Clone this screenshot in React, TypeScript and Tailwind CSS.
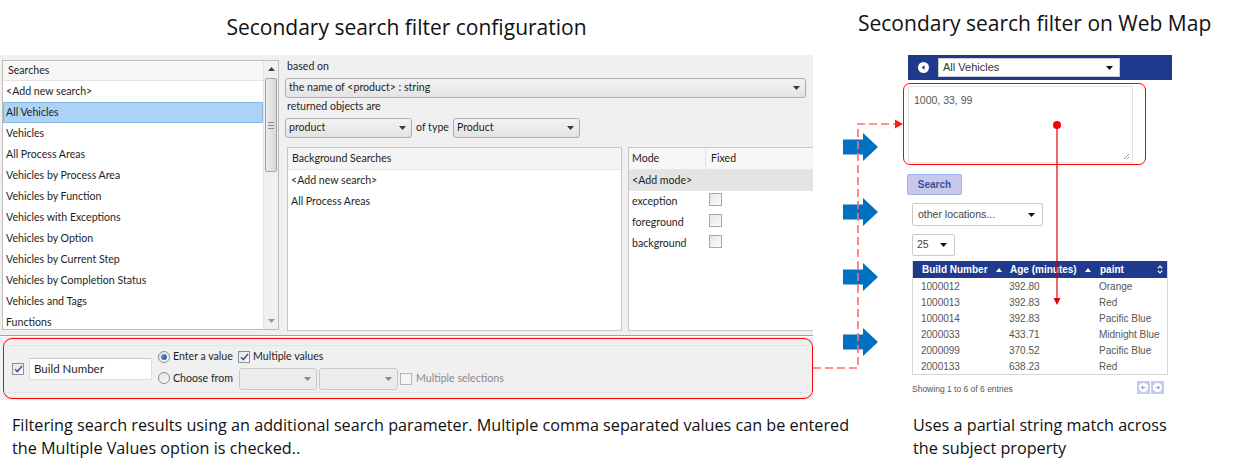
import React from "react";

function DownTri({ color = "#3a3a3a" }: { color?: string }) {
  return (
    <svg width="7" height="4" viewBox="0 0 7 4" className="shrink-0">
      <polygon points="0,0 7,0 3.5,4" fill={color} />
    </svg>
  );
}

function GrayDrop({ className, text }: { className: string; text: string }) {
  return (
    <div
      className={`flex items-center justify-between shrink-0 px-[3px] pr-[5px] border border-[#adadad] rounded-[3px] bg-linear-to-b from-[#f3f3f3] to-[#e3e3e3] ${className}`}
    >
      <span>{text}</span>
      <DownTri />
    </div>
  );
}

function WinCheck({ checked = false, className = "" }: { checked?: boolean; className?: string }) {
  return (
    <div
      className={`w-[12px] h-[12px] shrink-0 border border-[#8e8f8f] bg-linear-to-br from-[#e6e6e6] to-[#fbfbfb] flex items-center justify-center ${className}`}
    >
      {checked && (
        <svg width="9" height="8" viewBox="0 0 9 8">
          <path d="M1 4.2 L3.4 6.6 L8 1" stroke="#3b5998" strokeWidth="1.6" fill="none" />
        </svg>
      )}
    </div>
  );
}

function Radio({ selected = false }: { selected?: boolean }) {
  return (
    <div className="w-[12px] h-[12px] shrink-0 rounded-full border border-[#8e8f8f] bg-linear-to-br from-[#e4e4e4] to-[#fcfcfc] flex items-center justify-center">
      {selected && <div className="w-[6px] h-[6px] rounded-full bg-linear-to-br from-[#6fa3e8] to-[#1d4f9c]" />}
    </div>
  );
}

const searches = [
  "<Add new search>",
  "All Vehicles",
  "Vehicles",
  "All Process Areas",
  "Vehicles by Process Area",
  "Vehicles by Function",
  "Vehicles with Exceptions",
  "Vehicles by Option",
  "Vehicles by Current Step",
  "Vehicles by Completion Status",
  "Vehicles and Tags",
  "Functions",
];

function ConfigPanel() {
  return (
    <div className="w-[813px] h-[345px] shrink-0 bg-[#f0f0f0] overflow-hidden font-['Lato','Liberation_Sans',sans-serif] text-[10.6px] text-[#1e1e1e] flex flex-col">
      <div className="h-[278px] flex shrink-0">
        {/* Searches list */}
        <div className="mt-[5px] ml-[2px] w-[277px] h-[270px] shrink-0 border border-[#bdbdbd] bg-white flex overflow-hidden">
          <div className="flex-1 flex flex-col">
            <div className="h-[20px] shrink-0 flex items-center pl-[5px] bg-[#f7f7f7] border-b border-[#e2e2e2]">Searches</div>
            {searches.map((s) => (
              <div
                key={s}
                className={
                  s === "All Vehicles"
                    ? "h-[21px] shrink-0 flex items-center pl-[3px] bg-[#acd3f6] shadow-[inset_0_0_0_1px_#85b5e2]"
                    : "h-[21px] shrink-0 flex items-center pl-[3px]"
                }
              >
                {s}
              </div>
            ))}
          </div>
          <div className="w-[15px] shrink-0 bg-[#f0f0f0] border-l border-[#e4e4e4] flex flex-col items-center">
            <div className="h-[16px] flex items-center justify-center">
              <svg width="7" height="4" viewBox="0 0 7 4">
                <polygon points="0,4 7,4 3.5,0" fill="#404040" />
              </svg>
            </div>
            <div className="mt-[1px] w-[12px] h-[94px] rounded-[2px] border border-[#a3a3a3] bg-linear-to-r from-[#ececec] to-[#d8d8d8] flex flex-col items-center justify-center gap-[2px]">
              <div className="w-[6px] h-px bg-[#8a8a8a]" />
              <div className="w-[6px] h-px bg-[#8a8a8a]" />
              <div className="w-[6px] h-px bg-[#8a8a8a]" />
            </div>
            <div className="flex-1" />
            <div className="h-[16px] flex items-center justify-center">
              <DownTri color="#9a9a9a" />
            </div>
          </div>
        </div>

        {/* right part */}
        <div className="ml-[5px] w-[529px] shrink-0 flex flex-col pt-[4px]">
          <div className="h-[16px] flex items-center pl-[3px]">based on</div>
          <GrayDrop className="mt-[3px] ml-[1px] w-[521px] h-[20px]" text="the name of <product> : string" />
          <div className="h-[18px] flex items-center pl-[3px]">returned objects are</div>
          <div className="mt-[2px] ml-[1px] flex items-center h-[20px]">
            <GrayDrop className="w-[127px] h-[20px]" text="product" />
            <span className="mx-[4px]">of type</span>
            <GrayDrop className="w-[127px] h-[20px]" text="Product" />
          </div>
          <div className="mt-[9px] ml-[3px] flex gap-[6px] h-[184px]">
            <div className="w-[335px] h-[184px] shrink-0 border border-[#c6c6c6] bg-white">
              <div className="h-[22px] flex items-center pl-[4px] bg-[#f5f5f5] border-b border-[#e6e6e6]">Background Searches</div>
              <div className="h-[21px] flex items-center pl-[3px]">&lt;Add new search&gt;</div>
              <div className="h-[21px] flex items-center pl-[3px]">All Process Areas</div>
            </div>
            <div className="w-[200px] h-[184px] shrink-0 border border-[#c6c6c6] bg-white">
              <div className="h-[22px] flex bg-[#f7f7f7] border-b border-[#e6e6e6]">
                <div className="w-[77px] flex items-center pl-[3px] border-r border-[#e2e2e2]">Mode</div>
                <div className="flex items-center pl-[5px]">Fixed</div>
              </div>
              <div className="h-[21px] flex items-center pl-[3px] bg-[#e4e4e4]">&lt;Add mode&gt;</div>
              {["exception", "foreground", "background"].map((m) => (
                <div key={m} className="h-[21px] flex items-center">
                  <div className="w-[78px] pl-[3px]">{m}</div>
                  <WinCheck className="ml-[2px] -mt-[4px] border-[#a8a8a8] w-[13px] h-[13px]" />
                </div>
              ))}
            </div>
          </div>
        </div>
      </div>

      {/* separator */}
      <div className="h-[2px] shrink-0" />
      <div className="h-px shrink-0 bg-[#a2a2a2]" />
      <div className="h-px shrink-0 bg-white" />

      {/* bottom filter row */}
      <div className="mt-[1px] ml-[3px] w-[810px] h-[61px] shrink-0 border border-[#ff0000] rounded-[9px] flex flex-col justify-center">
        <div className="h-[48px] border-y border-[#e3e3e3] flex items-center">
          <WinCheck checked className="ml-[8px]" />
          <div className="ml-[5px] w-[123px] h-[22px] bg-white border border-[#dcdcdc] border-t-[#c5c5c5] flex items-center pl-[4px] text-[11.5px]">
            Build Number
          </div>
          <div className="ml-[6px] flex flex-col">
            <div className="h-[20px] flex items-center">
              <div className="w-[80px] flex items-center gap-[3px]">
                <Radio selected />
                <span>Enter a value</span>
              </div>
              <WinCheck checked />
              <span className="ml-[3px]">Multiple values</span>
            </div>
            <div className="h-[23px] flex items-center">
              <div className="w-[81px] flex items-center gap-[3px]">
                <Radio />
                <span>Choose from</span>
              </div>
              <div className="w-[78px] h-[22px] border border-[#c8c8c8] rounded-[3px] bg-[#ececec] flex items-center justify-end pr-[5px]">
                <DownTri color="#888" />
              </div>
              <div className="ml-[2px] w-[79px] h-[22px] border border-[#c8c8c8] rounded-[3px] bg-[#ececec] flex items-center justify-end pr-[5px]">
                <DownTri color="#888" />
              </div>
              <WinCheck className="ml-[2px] border-[#b5b5b5] bg-none bg-[#f4f4f4]" />
              <span className="ml-[4px] text-[#8a8a8a]">Multiple selections</span>
            </div>
          </div>
        </div>
      </div>
    </div>
  );
}

function BlueArrow() {
  return (
    <svg width="35" height="28" viewBox="0 0 35 28">
      <polygon points="0,6.5 20,6.5 20,0 35,14 20,28 20,21.5 0,21.5" fill="#0070c0" />
    </svg>
  );
}

const rows = [
  ["1000012", "392.80", "Orange"],
  ["1000013", "392.83", "Red"],
  ["1000014", "392.83", "Pacific Blue"],
  ["2000033", "433.71", "Midnight Blue"],
  ["2000099", "370.52", "Pacific Blue"],
  ["2000133", "638.23", "Red"],
];

function UpTri() {
  return (
    <svg width="6" height="4" viewBox="0 0 6 4" className="shrink-0">
      <polygon points="0,4 6,4 3,0" fill="#ffffff" />
    </svg>
  );
}

function WebMap() {
  return (
    <div className="flex-1 flex flex-col font-['Liberation_Sans',Arial,sans-serif] text-[10px] text-[#555]">
      <div className="ml-[5px] w-[264px] h-[25px] bg-[#1f3a8c] flex items-center">
        <svg width="11" height="11" viewBox="0 0 11 11" className="ml-[10px]">
          <circle cx="5.5" cy="5.5" r="5.5" fill="#ffffff" />
          <polygon points="3.6,5.5 6.6,3.3 6.6,7.7" fill="#1f3a8c" />
        </svg>
        <div className="ml-[9px] w-[182px] h-[19px] bg-white border border-[#cfcfcf] flex items-center justify-between pl-[4px] pr-[6px] text-[11px] text-[#333]">
          <span>All Vehicles</span>
          <DownTri color="#111" />
        </div>
      </div>
      <div className="mt-[3px] w-[243px] h-[82px] border border-[#ff0000] rounded-[7px] pl-[4px] pt-[2px]">
        <div className="relative w-[225px] h-[77px] bg-white border border-[#e2e2e2] pl-[5px] pt-[6px] text-[10.5px] text-[#555]">
          1000, 33, 99
          <svg width="7" height="7" viewBox="0 0 7 7" className="absolute right-[2px] bottom-[2px]">
            <path d="M6 1 L1 6 M6 4 L4 6" stroke="#999" strokeWidth="1" />
          </svg>
        </div>
      </div>
      <div className="mt-[9px] ml-[4px] w-[55px] h-[21px] bg-[#c6c9e9] border border-[#9cb2ee] rounded-[2px] flex items-center justify-center text-[10px] font-bold text-[#3a4f9e]">
        Search
      </div>
      <div className="mt-[8px] ml-[9px] w-[131px] h-[23px] bg-white border border-[#c9c9c9] rounded-[2px] flex items-center justify-between pl-[5px] pr-[7px] text-[10.5px] text-[#444]">
        <span>other locations...</span>
        <DownTri color="#111" />
      </div>
      <div className="mt-[8px] ml-[9px] w-[43px] h-[22px] bg-white border border-[#c9c9c9] rounded-[2px] flex items-center justify-between pl-[4px] pr-[7px] text-[10.5px] text-[#444]">
        <span>25</span>
        <DownTri color="#111" />
      </div>
      <div className="mt-[5px] ml-[9px] w-[256px] border border-[#d6d6d6] border-t-0">
        <div className="h-[17px] bg-[#1f3a8c] flex items-center text-white font-bold text-[10px] whitespace-nowrap">
          <div className="w-[88px] shrink-0 pl-[9px] flex items-center gap-[8px]">
            <span>Build Number</span>
            <UpTri />
          </div>
          <div className="w-[90px] shrink-0 pl-[9px] flex items-center gap-[8px]">
            <span>Age (minutes)</span>
            <UpTri />
          </div>
          <div className="flex-1 pl-[9px] pr-[4px] flex items-center justify-between">
            <span>paint</span>
            <svg width="6" height="9" viewBox="0 0 6 9">
              <path d="M0.8 3.4 L3 1.2 L5.2 3.4 M0.8 5.6 L3 7.8 L5.2 5.6" stroke="#fff" strokeWidth="1.2" fill="none" />
            </svg>
          </div>
        </div>
        {rows.map((r) => (
          <div key={r[0] + r[2]} className="h-[16px] flex items-center bg-white">
            <div className="w-[88px] pl-[8px]">{r[0]}</div>
            <div className="w-[90px] pl-[8px]">{r[1]}</div>
            <div className="flex-1 pl-[8px]">{r[2]}</div>
          </div>
        ))}
      </div>
      <div className="mt-[5px] ml-[9px] w-[252px] flex items-center justify-between">
        <span className="text-[8.5px] text-[#555] mt-[3px]">Showing 1 to 6 of 6 entries</span>
        <div className="flex gap-px">
          {[0, 1].map((i) => (
            <div key={i} className="w-[13px] h-[13px] bg-[#c5cbe9] flex items-center justify-center">
              <svg width="9" height="9" viewBox="0 0 9 9">
                <circle cx="4.5" cy="4.5" r="4.5" fill="#fff" />
                {i === 0 ? (
                  <path d="M6.5 4.5 H2.5 M4.2 2.8 L2.5 4.5 L4.2 6.2" stroke="#9aa6d6" strokeWidth="1.1" fill="none" />
                ) : (
                  <path d="M2.5 4.5 H6.5 M4.8 2.8 L6.5 4.5 L4.8 6.2" stroke="#9aa6d6" strokeWidth="1.1" fill="none" />
                )}
              </svg>
            </div>
          ))}
        </div>
      </div>
    </div>
  );
}

export default function App() {
  return (
    <div className="relative w-[1246px] h-[472px] bg-white overflow-hidden text-black">
      {/* titles */}
      <div className="flex h-[55px] font-['Open_Sans',sans-serif] text-[21px] text-[#111] whitespace-nowrap">
        <div className="w-[813px] shrink-0 flex justify-center pt-[13px] leading-[28px]">Secondary search filter configuration</div>
        <div className="pl-[45px] pt-[9px] leading-[28px]">Secondary search filter on Web Map</div>
      </div>

      {/* main */}
      <div className="flex h-[345px]">
        <ConfigPanel />
        <div className="w-[90px] shrink-0 flex flex-col gap-[37px] pt-[78px] pl-[30px]">
          <BlueArrow />
          <BlueArrow />
          <BlueArrow />
          <BlueArrow />
        </div>
        <WebMap />
      </div>

      {/* captions */}
      <div className="flex pt-[14px] font-['Open_Sans',sans-serif] text-[16.2px] leading-[23px] text-[#111]">
        <div className="w-[913px] shrink-0 pl-[12px] whitespace-nowrap">
          Filtering search results using an additional search parameter. Multiple comma separated values can be entered
          <br />
          the Multiple Values option is checked..
        </div>
        <div className="whitespace-nowrap">
          Uses a partial string match across
          <br />
          the subject property
        </div>
      </div>

      {/* overlay connectors */}
      <svg className="absolute inset-0 pointer-events-none" width="1246" height="472" viewBox="0 0 1246 472">
        <path d="M813 368 H858 V124 H896" stroke="#ff6d6d" strokeWidth="1.6" strokeDasharray="8 4" fill="none" />
        <polygon points="895,119.5 903,124 895,128.5" fill="#ff1a1a" />
        <line x1="1057" y1="125" x2="1057" y2="299" stroke="#e00000" strokeWidth="1.2" />
        <polygon points="1053.5,298 1060.5,298 1057,305" fill="#e00000" />
        <circle cx="1057" cy="125" r="4" fill="#ff0000" />
      </svg>
    </div>
  );
}
